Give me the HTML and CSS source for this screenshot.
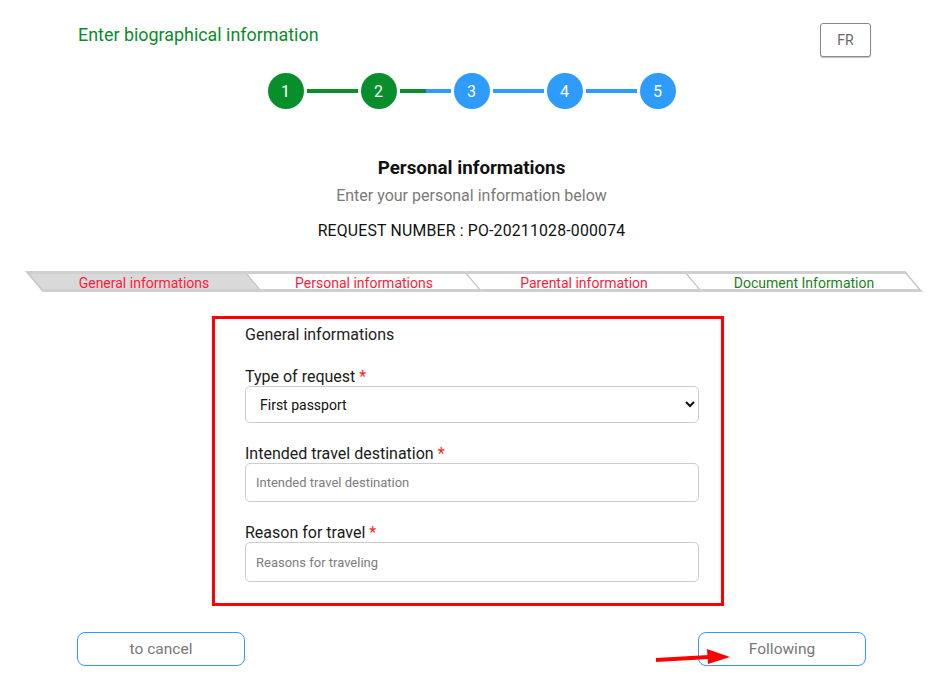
FILE: index.html
```html
<!DOCTYPE html>
<html lang="en">
<head>
<meta charset="utf-8">
<title>Enter biographical information</title>
<link rel="stylesheet" href="styles.css">
</head>
<body>
<div class="page">
  <header class="top">
    <h1 class="title">Enter biographical information</h1>
    <button class="lang">FR</button>
  </header>

  <div class="stepper">
    <span class="step done">1</span>
    <span class="bar done"></span>
    <span class="step done">2</span>
    <span class="bar half"></span>
    <span class="step">3</span>
    <span class="bar"></span>
    <span class="step">4</span>
    <span class="bar"></span>
    <span class="step">5</span>
  </div>

  <div class="intro">
    <h2 class="heading">Personal informations</h2>
    <p class="sub">Enter your personal information below</p>
    <p class="reqnum">REQUEST NUMBER : PO-20211028-000074</p>
  </div>

  <nav class="tabs">
    <div class="tab active"><span>General informations</span></div>
    <div class="tab"><span>Personal informations</span></div>
    <div class="tab"><span>Parental information</span></div>
    <div class="tab green"><span>Document Information</span></div>
  </nav>

  <form class="formbox">
    <div class="section-title">General informations</div>
    <div class="field">
      <label class="label">Type of request <span class="req">*</span></label>
      <select class="control select">
        <option>First passport</option>
      </select>
    </div>
    <div class="field">
      <label class="label">Intended travel destination <span class="req">*</span></label>
      <input class="control input" type="text" placeholder="Intended travel destination">
    </div>
    <div class="field last">
      <label class="label">Reason for travel <span class="req">*</span></label>
      <input class="control input tall" type="text" placeholder="Reasons for traveling">
    </div>
  </form>

  <div class="actions">
    <button class="btn" type="button">to cancel</button>
    <button class="btn" type="button">Following</button>
  </div>

  <svg class="arrow" width="80" height="24" viewBox="0 0 80 24">
    <line x1="1" y1="15" x2="54" y2="12" stroke="#ff0000" stroke-width="4"/>
    <polygon points="52,4 75,12 53,19" fill="#ff0000"/>
  </svg>
</div>
</body>
</html>
```

FILE: styles.css
```css
* { box-sizing: border-box; }

body {
  margin: 0;
  background: #ffffff;
  font-family: Roboto, "Liberation Sans", Arial, sans-serif;
  color: #222;
}

.page {
  position: relative;
  width: 943px;
  height: 683px;
  overflow: hidden;
}

.top {
  display: flex;
  justify-content: space-between;
  align-items: flex-start;
  padding: 23px 72px 0 78px;
}

.title {
  margin: 1px 0 0 0;
  font-size: 17.9px;
  font-weight: 400;
  line-height: 21px;
  color: #0b8a2a;
}

.lang {
  width: 51px;
  height: 34px;
  background: #fff;
  border: 1px solid #8a8a8a;
  border-radius: 3px;
  box-shadow: 0 1px 1px rgba(0,0,0,0.25);
  font-family: Roboto, sans-serif;
  font-size: 14px;
  color: #666;
  padding: 0;
}

.stepper {
  display: flex;
  justify-content: center;
  align-items: center;
  margin-top: 16px;
  height: 36px;
}

.step {
  width: 36px;
  height: 36px;
  border-radius: 50%;
  background: #2e9bff;
  color: #fff;
  display: flex;
  align-items: center;
  justify-content: center;
  font-size: 16px;
}

.step.done { background: #068f2b; }

.bar {
  width: 51px;
  height: 4px;
  margin: 0 3px;
  background: #2e9bff;
}

.bar.done { background: #068f2b; }
.bar.half { background: linear-gradient(to right, #068f2b 50%, #2e9bff 50%); }

.intro {
  text-align: center;
  margin-top: 48px;
}

.heading {
  margin: 0;
  font-size: 18.8px;
  line-height: 22px;
  font-weight: 700;
  color: #111;
}

.sub {
  margin: 7px 0 0 0;
  font-size: 16px;
  line-height: 20px;
  color: #7a7a7a;
}

.reqnum {
  margin: 15px 0 0 0;
  font-size: 15.8px;
  line-height: 20px;
  color: #111;
  letter-spacing: 0.2px;
}

.tabs {
  display: flex;
  justify-content: center;
  margin-top: 30px;
  padding-left: 5px;
}

.tab {
  position: relative;
  width: 220px;
  height: 21px;
  display: flex;
  align-items: center;
  justify-content: center;
  font-size: 14px;
  color: #ff1a3c;
}

.tab::before {
  content: "";
  position: absolute;
  inset: 0;
  border-top: 3px solid #cfcfcf;
  border-bottom: 3px solid #cfcfcf;
  border-right: 2px solid #c8c8c8;
  transform: skewX(40deg);
  background: #fff;
}

.tab:first-child::before { border-left: 2px solid #c8c8c8; }

.tab.active::before { background: #d9d9d9; }

.tab span {
  position: relative;
  line-height: 16px;
  top: 1px;
}

.tab.green { color: #1c7f1c; }

.formbox {
  width: 512px;
  margin: 24px auto 0 212px;
  border: 3px solid #ff0000;
  padding: 6px 22px 21px 30px;
}

.section-title {
  font-size: 16px;
  line-height: 20px;
  color: #222;
  margin-bottom: 22px;
}

.field { margin-bottom: 21px; }
.field.last { margin-bottom: 0; }

.label {
  display: block;
  font-size: 16px;
  line-height: 19px;
  color: #1a1a1a;
}

.req { color: #ff2020; }

.control {
  display: block;
  width: 100%;
  border: 1px solid #cccccc;
  border-radius: 5px;
  background: #fff;
  font-family: Roboto, sans-serif;
  font-size: 13px;
  color: #111;
}

.select {
  height: 37px;
  padding: 0 8px 0 10px;
  font-size: 14px;
}

.input {
  height: 39px;
  padding: 0 10px;
}

.input.tall { height: 40px; }

.input::placeholder { color: #7d7d7d; }

.actions {
  display: flex;
  justify-content: space-between;
  padding: 0 77px;
  margin-top: 26px;
}

.btn {
  width: 168px;
  height: 34px;
  background: #fff;
  border: 1px solid #2e9bff;
  border-radius: 8px;
  font-family: Roboto, sans-serif;
  font-size: 15.5px;
  color: #777;
  padding: 0;
}

.arrow {
  position: absolute;
  left: 655px;
  top: 645px;
}
```
